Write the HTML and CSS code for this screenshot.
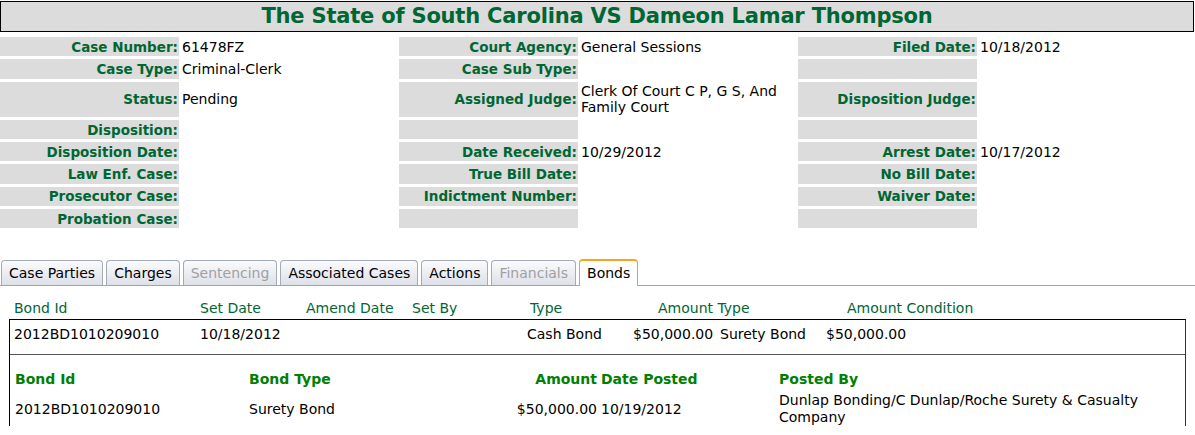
FILE: index.html
```html
<!DOCTYPE html>
<html lang="en">
<head>
  <meta charset="UTF-8">
  <title>Case Details</title>
  <link rel="stylesheet" href="styles.css">
</head>
<body>
  <div class="title">The State of South Carolina VS Dameon Lamar Thompson</div>

  <div class="case-info">
    <div class="lbl">Case Number:</div><div class="val">61478FZ</div>
    <div class="lbl">Court Agency:</div><div class="val">General Sessions</div>
    <div class="lbl">Filed Date:</div><div class="val">10/18/2012</div>

    <div class="lbl">Case Type:</div><div class="val">Criminal-Clerk</div>
    <div class="lbl">Case Sub Type:</div><div class="val"></div>
    <div class="lbl"></div><div class="val"></div>

    <div class="lbl">Status:</div><div class="val">Pending</div>
    <div class="lbl">Assigned Judge:</div><div class="val">Clerk Of Court C P, G S, And Family Court</div>
    <div class="lbl">Disposition Judge:</div><div class="val"></div>

    <div class="lbl">Disposition:</div><div class="val"></div>
    <div class="lbl"></div><div class="val"></div>
    <div class="lbl"></div><div class="val"></div>

    <div class="lbl">Disposition Date:</div><div class="val"></div>
    <div class="lbl">Date Received:</div><div class="val">10/29/2012</div>
    <div class="lbl">Arrest Date:</div><div class="val">10/17/2012</div>

    <div class="lbl">Law Enf. Case:</div><div class="val"></div>
    <div class="lbl">True Bill Date:</div><div class="val"></div>
    <div class="lbl">No Bill Date:</div><div class="val"></div>

    <div class="lbl">Prosecutor Case:</div><div class="val"></div>
    <div class="lbl">Indictment Number:</div><div class="val"></div>
    <div class="lbl">Waiver Date:</div><div class="val"></div>

    <div class="lbl">Probation Case:</div><div class="val"></div>
    <div class="lbl"></div><div class="val"></div>
    <div class="lbl"></div><div class="val"></div>
  </div>

  <ul class="tabs">
    <li>Case Parties</li>
    <li>Charges</li>
    <li class="disabled">Sentencing</li>
    <li>Associated Cases</li>
    <li>Actions</li>
    <li class="disabled">Financials</li>
    <li class="active">Bonds</li>
  </ul>

  <div class="bonds">
    <div class="bond-head">
      <span>Bond Id</span><span>Set Date</span><span>Amend Date</span><span>Set By</span>
      <span>Type</span><span>Amount Type</span><span>Amount Condition</span>
    </div>
    <div class="bond-box">
      <div class="bond-row">
        <span>2012BD1010209010</span><span>10/18/2012</span><span></span><span></span>
        <span>Cash Bond</span><span>$50,000.00</span><span>Surety Bond</span><span>$50,000.00</span>
      </div>
      <div class="detail detail-head">
        <span>Bond Id</span><span>Bond Type</span><span class="amt">Amount</span><span class="date">Date Posted</span><span>Posted By</span>
      </div>
      <div class="detail">
        <span>2012BD1010209010</span><span>Surety Bond</span><span class="amt">$50,000.00</span><span class="date">10/19/2012</span><span class="who">Dunlap Bonding/C Dunlap/Roche Surety &amp; Casualty Company</span>
      </div>
    </div>
  </div>
</body>
</html>
```

FILE: styles.css
```css
body { margin:0; background:#fff; color:#000;
       font-family:"DejaVu Sans", Verdana, sans-serif; font-size:14px; }

.title { margin:1px 1px 0 0; height:29px; line-height:29px; border:1px solid #000;
         background:#dcdcdc; color:#006633; text-align:center;
         font-size:21px; font-weight:bold; letter-spacing:-0.2px; }

.case-info { display:grid; margin-top:5px;
             grid-template-columns:179px 220px 179px 220px 179px 1fr;
             row-gap:3px; }
.lbl { background:#dcdcdc; color:#006633; font-weight:bold; font-size:13.5px;
       text-align:right; padding:0 1px 0 0; min-height:19.3px;
       display:flex; align-items:center; justify-content:flex-end; }
.val { padding:1.65px 0 1.65px 3px; line-height:16px; display:flex; align-items:center; }

.tabs { list-style:none; margin:31px 0 0; padding:0 0 0 1px; display:flex; gap:3px;
        border-bottom:1px solid #9ea4ae; height:26px; }
.tabs li { height:25px; line-height:25px; padding:0 7px; box-sizing:border-box;
           border:1px solid #a3aab8; border-bottom:none; border-radius:4px 4px 0 0;
           background:linear-gradient(#fbfbfd, #dde0e8); margin-top:1px; }
.tabs li.disabled { color:#a0a0a0; }
.tabs li.active { background:#fff; border-top:2px solid #f5a623; height:27px;
                  margin-top:0; }

.bonds { padding:0 0 0 9px; }
.bond-head { display:grid; padding:14px 0 3px 5px; color:#006633;
             grid-template-columns:186px 106px 106px 118px 128px 189px 1fr; }
.bond-box { border:1px solid #000; border-right-color:#333; border-bottom:none;
            margin-right:9px; }
.bond-row { display:grid; padding:6px 0 12px 4px; border-bottom:1px solid #555;
            grid-template-columns:186px 106px 106px 115px 106px 87px 106px 1fr; }
.detail { display:grid; padding:0 0 0 5px; align-items:center;
          grid-template-columns:234px 200px 148px 182px 1fr; }
.detail-head { color:#008000; font-weight:bold; font-size:14px; padding-top:15px; height:18px; }
.detail .amt { text-align:right; }
.detail .date { padding-left:4px; }
.detail:not(.detail-head) { padding-top:4px; line-height:17px; }
.who { max-width:370px; }
```
